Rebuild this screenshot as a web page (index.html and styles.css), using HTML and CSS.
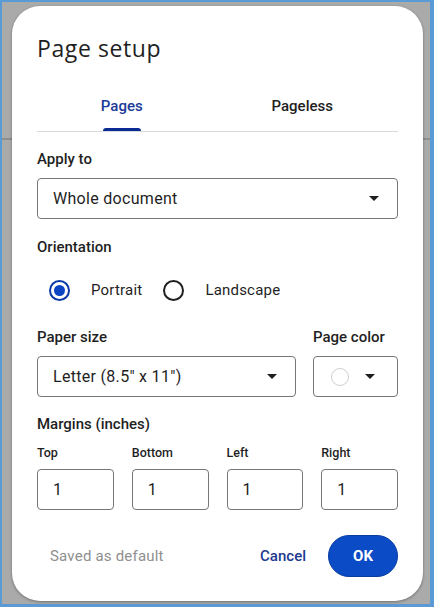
FILE: index.html
```html
<!DOCTYPE html>
<html lang="en">
<head>
<meta charset="utf-8">
<title>Page setup</title>
<link rel="stylesheet" href="styles.css">
</head>
<body>
<div class="frame">
  <div class="dialog">
    <h1 class="title">Page setup</h1>

    <div class="tabs">
      <div class="tab tab-active">Pages</div>
      <div class="tab">Pageless</div>
    </div>

    <div class="label label-first">Apply to</div>
    <div class="select select-wide">
      <span class="select-text">Whole document</span>
      <span class="caret"></span>
    </div>

    <div class="label label-gap">Orientation</div>
    <div class="radios">
      <div class="radio-item">
        <span class="radio radio-on"><span class="radio-dot"></span></span>
        <span class="radio-text">Portrait</span>
      </div>
      <div class="radio-item">
        <span class="radio"></span>
        <span class="radio-text">Landscape</span>
      </div>
    </div>

    <div class="paper-row">
      <div class="paper-col">
        <div class="label">Paper size</div>
        <div class="select">
          <span class="select-text">Letter (8.5" x 11")</span>
          <span class="caret"></span>
        </div>
      </div>
      <div class="color-col">
        <div class="label">Page color</div>
        <div class="select color-select">
          <span class="swatch"></span>
          <span class="caret"></span>
        </div>
      </div>
    </div>

    <div class="label label-margins">Margins (inches)</div>
    <div class="margins">
      <div class="margin-field">
        <div class="small-label">Top</div>
        <div class="num-box">1</div>
      </div>
      <div class="margin-field">
        <div class="small-label">Bottom</div>
        <div class="num-box">1</div>
      </div>
      <div class="margin-field">
        <div class="small-label">Left</div>
        <div class="num-box">1</div>
      </div>
      <div class="margin-field">
        <div class="small-label">Right</div>
        <div class="num-box">1</div>
      </div>
    </div>

    <div class="footer">
      <span class="saved">Saved as default</span>
      <span class="cancel">Cancel</span>
      <span class="ok">OK</span>
    </div>
  </div>
</div>
</body>
</html>
```

FILE: styles.css
```css
* { box-sizing: border-box; }

html, body {
  margin: 0;
  padding: 0;
}

body {
  width: 434px;
  height: 607px;
  font-family: Roboto, "Noto Sans", Arial, sans-serif;
  color: #1f1f1f;
}

.frame {
  width: 434px;
  height: 607px;
  border-style: solid;
  border-color: #5b9bd5;
  border-width: 2px 4px 3px 2px;
  padding: 4px 7px 3px 10px;
  background-color: #aaaaaa;
  background-image:
    linear-gradient(to bottom, transparent 136px, #8e8e8e 136px, #8e8e8e 138px, transparent 138px);
}

.dialog {
  width: 411px;
  height: 595px;
  background: #ffffff;
  border-radius: 28px;
  box-shadow: 0 1px 3px rgba(0, 0, 0, 0.35);
  padding: 28px 25px 0 25px;
  display: flex;
  flex-direction: column;
}

.title {
  margin: 0;
  font-family: "Open Sans", Roboto, sans-serif;
  font-weight: 400;
  font-size: 23px;
  letter-spacing: 0.6px;
  line-height: 28px;
  color: #1f1f1f;
}

.tabs {
  display: flex;
  margin-top: 34px;
  border-bottom: 1px solid #dadada;
}

.tab {
  flex: 1;
  display: flex;
  flex-direction: column;
  align-items: center;
  padding-right: 11px;
  font-size: 15px;
  font-weight: 500;
  line-height: 20px;
  color: #1f1f1f;
}

.tab::after {
  content: "";
  display: block;
  width: 38px;
  height: 3px;
  margin-top: 12px;
  border-radius: 3px 3px 0 0;
  background: transparent;
}

.tab-active {
  color: #1c3a98;
}

.tab-active::after {
  background: #0b2b94;
}

.label {
  font-size: 15px;
  font-weight: 500;
  line-height: 20px;
  color: #1f1f1f;
  margin-bottom: 9px;
}

.label-first {
  margin-top: 17px;
}

.label-gap {
  margin-top: 18px;
  margin-bottom: 13px;
}

.select {
  height: 41px;
  border: 1px solid #747775;
  border-radius: 4px;
  display: flex;
  align-items: center;
  justify-content: space-between;
  padding: 0 18px 0 15px;
}

.select-text {
  font-size: 16px;
  line-height: 20px;
  letter-spacing: 0.3px;
  color: #1f1f1f;
}

.caret {
  width: 0;
  height: 0;
  border-left: 5.5px solid transparent;
  border-right: 5.5px solid transparent;
  border-top: 5px solid #1f1f1f;
}

.radios {
  display: flex;
  align-items: center;
  height: 40px;
  padding-left: 12px;
}

.radio-item {
  display: flex;
  align-items: center;
  margin-right: 21px;
}

.radio {
  width: 21px;
  height: 21px;
  border: 2px solid #1f1f1f;
  border-radius: 50%;
  display: flex;
  align-items: center;
  justify-content: center;
  margin-right: 21px;
}

.radio-on {
  border-color: #0b3aa6;
}

.radio-dot {
  width: 11px;
  height: 11px;
  border-radius: 50%;
  background: #0b45c4;
}

.radio-text {
  font-size: 15px;
  line-height: 20px;
  letter-spacing: 0.2px;
  color: #1f1f1f;
}

.paper-row {
  display: flex;
  gap: 17px;
  margin-top: 17px;
}

.paper-col {
  flex: 1;
}

.color-col {
  width: 85px;
}

.color-select {
  padding: 0 22px 0 17px;
}

.swatch {
  width: 18px;
  height: 18px;
  border-radius: 50%;
  border: 1px solid #cfcfcf;
}

.label-margins {
  margin-top: 17px;
  margin-bottom: 11px;
}

.margins {
  display: grid;
  grid-template-columns: repeat(4, 1fr);
  column-gap: 18px;
}

.small-label {
  font-size: 12.5px;
  font-weight: 500;
  line-height: 16px;
  color: #1f1f1f;
  margin-bottom: 8px;
}

.num-box {
  height: 41px;
  border: 1px solid #747775;
  border-radius: 4px;
  display: flex;
  align-items: center;
  padding-left: 15px;
  font-size: 16px;
  color: #1f1f1f;
}

.footer {
  display: flex;
  align-items: center;
  margin-top: 25px;
}

.saved {
  flex: 1;
  padding-left: 13px;
  font-size: 15px;
  letter-spacing: 0.2px;
  color: #8f8f8f;
}

.cancel {
  font-size: 15px;
  font-weight: 500;
  color: #1c3a8f;
  margin-right: 22px;
}

.ok {
  width: 70px;
  height: 42px;
  border-radius: 21px;
  background: #0b4bc6;
  border: 1px solid #0a3d9e;
  color: #ffffff;
  font-size: 15px;
  font-weight: 700;
  display: flex;
  align-items: center;
  justify-content: center;
}
```
